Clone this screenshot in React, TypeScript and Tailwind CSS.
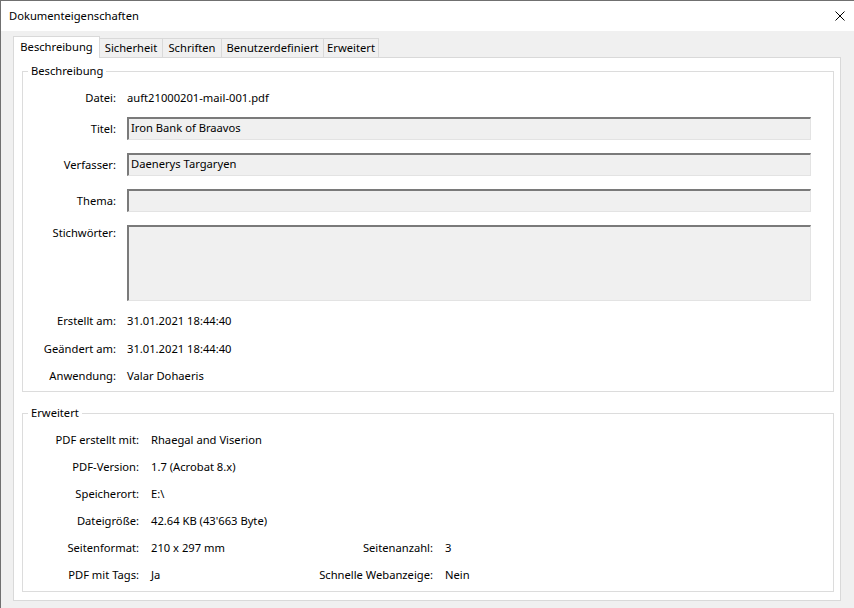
import React from 'react';

const tabs = [
  { label: 'Sicherheit', w: 'w-[63px]' },
  { label: 'Schriften', w: 'w-[59px]' },
  { label: 'Benutzerdefiniert', w: 'w-[102px]' },
  { label: 'Erweitert', w: 'w-[55px]' },
];

function Field({ value, tall }: { value?: string; tall?: boolean }) {
  return (
    <div
      className={`w-[684px] ${tall ? 'h-[76px]' : 'h-[23px]'} bg-[#f0f0f0] border-t-2 border-l-2 border-t-[#7a7a7a] border-l-[#7a7a7a] border-r border-b border-r-[#e3e3e3] border-b-[#e3e3e3] pl-[2px] pt-[1px] leading-4`}
    >
      {value}
    </div>
  );
}

export default function App() {
  return (
    <div className="w-[854px] h-[608px] overflow-hidden bg-[#f0f0f0] border-l border-t border-[#707070] flex flex-col text-[11.2px] leading-4 text-black font-['Segoe_UI','Noto_Sans',sans-serif]">
      <div className="h-[30px] shrink-0 bg-white flex items-center justify-between pl-[8px] pr-[9px]">
        <span>Dokumenteigenschaften</span>
        <svg width="10" height="10" viewBox="0 0 10 10" className="mt-[-1px]">
          <path d="M0.5 0.5 L9.5 9.5 M9.5 0.5 L0.5 9.5" stroke="#000" strokeWidth="1" />
        </svg>
      </div>

      <div className="pl-[12px] pt-[5px]">
        <div className="flex items-end h-[21px]">
          <div className="relative z-10 w-[87px] h-[22px] mb-[-1px] bg-white border border-b-0 border-[#d9d9d9] flex items-center justify-center pb-[2px]">
            Beschreibung
          </div>
          {tabs.map(t => (
            <div
              key={t.label}
              className={`${t.w} h-[19px] border-t border-r border-[#d9d9d9] bg-[#f0f0f0] flex items-center justify-center`}
            >
              {t.label}
            </div>
          ))}
        </div>

        <div className="w-[828px] h-[544px] bg-white border border-[#d9d9d9]">
          <fieldset className="ml-[8px] mt-[5px] w-[812px] border border-[#dcdcdc] pb-[5px]">
            <legend className="ml-[5px] px-[3px] leading-4">Beschreibung</legend>
            <div className="flex flex-col">
              <div className="flex items-center h-[20px] mt-[9px]">
                <span className="w-[93px] text-right">Datei:</span>
                <span className="ml-[11px]">auft21000201-mail-001.pdf</span>
              </div>
              <div className="flex items-center mt-[9px]">
                <span className="w-[93px] text-right">Titel:</span>
                <div className="ml-[11px]"><Field value="Iron Bank of Braavos" /></div>
              </div>
              <div className="flex items-center mt-[13px]">
                <span className="w-[93px] text-right">Verfasser:</span>
                <div className="ml-[11px]"><Field value="Daenerys Targaryen" /></div>
              </div>
              <div className="flex items-center mt-[13px]">
                <span className="w-[93px] text-right">Thema:</span>
                <div className="ml-[11px]"><Field /></div>
              </div>
              <div className="flex items-start mt-[13px]">
                <span className="w-[93px] text-right">Stichwörter:</span>
                <div className="ml-[11px]"><Field tall /></div>
              </div>
              <div className="flex items-center h-[20px] mt-[10px]">
                <span className="w-[93px] text-right">Erstellt am:</span>
                <span className="ml-[11px]">31.01.2021 18:44:40</span>
              </div>
              <div className="flex items-center h-[20px] mt-[8px]">
                <span className="w-[93px] text-right">Geändert am:</span>
                <span className="ml-[11px]">31.01.2021 18:44:40</span>
              </div>
              <div className="flex items-center h-[20px] mt-[7px]">
                <span className="w-[93px] text-right">Anwendung:</span>
                <span className="ml-[11px]">Valar Dohaeris</span>
              </div>
            </div>
          </fieldset>

          <fieldset className="ml-[8px] mt-[13px] w-[812px] border border-[#dcdcdc] pb-[3px]">
            <legend className="ml-[5px] px-[3px] leading-4">Erweitert</legend>
            <div className="grid grid-cols-[116px_150px_120px_1fr] gap-x-[12px] auto-rows-[27px] items-center mt-[5px]">
              <span className="text-right">PDF erstellt mit:</span>
              <span className="col-span-3">Rhaegal and Viserion</span>
              <span className="text-right">PDF-Version:</span>
              <span className="col-span-3">1.7 (Acrobat 8.x)</span>
              <span className="text-right">Speicherort:</span>
              <span className="col-span-3">E:\</span>
              <span className="text-right">Dateigröße:</span>
              <span className="col-span-3">42.64 KB (43'663 Byte)</span>
              <span className="text-right">Seitenformat:</span>
              <span>210 x 297 mm</span>
              <span className="text-right whitespace-nowrap">Seitenanzahl:</span>
              <span>3</span>
              <span className="text-right">PDF mit Tags:</span>
              <span>Ja</span>
              <span className="text-right whitespace-nowrap">Schnelle Webanzeige:</span>
              <span>Nein</span>
            </div>
          </fieldset>
        </div>
      </div>
    </div>
  );
}
